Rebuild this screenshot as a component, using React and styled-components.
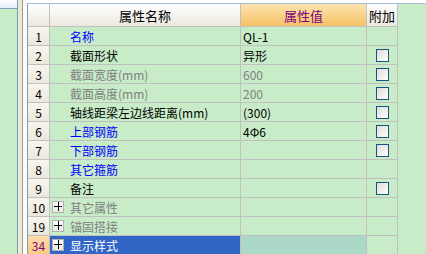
import styled, { createGlobalStyle, css } from "styled-components";

const GlobalStyle = createGlobalStyle`
  html, body {
    margin: 0;
    padding: 0;
    background: #c8ecc8;
  }
  body {
    font-family: "Noto Sans CJK SC", "Liberation Sans", sans-serif;
    font-size: 12px;
  }
`;

const tones = {
	black: "#000000",
	blue: "#0000ff",
	gray: "#808080",
	white: "#ffffff",
};

const Page = styled.div`
	display: flex;
	width: 426px;
	height: 254px;
	overflow: hidden;
`;

const SidePanel = styled.div`
	width: 17px;
	border-right: 1px solid #7f9db9;
	background: #c8ecc8;
	display: flex;
	flex-direction: column;
`;

const SideTab = styled.div`
	height: 8px;
	background: linear-gradient(#ffffff, #e4eef8);
	border-bottom: 1px solid #7f9db9;
`;

const Bevel = styled.div`
	width: 4px;
	background: #ece9d8;
	border-right: 1px solid #9a9a90;
`;

const Gutter = styled.div`
	width: 4px;
	background: #fbfbf8;
`;

const Panel = styled.div`
	flex: 1;
	display: flex;
	flex-direction: column;
	background: #ffffff;
	padding-top: 3px;
`;

const Grid = styled.div`
	flex: 1;
	display: grid;
	grid-template-columns: 22px 191px 126px 31px 1fr;
	grid-auto-rows: 19px;
	grid-template-rows: 23px;
	border-top: 1px solid #a7bfd8;
	border-left: 1px solid #7f9db9;
	background: #c8ecc8;
`;

const Cell = styled.div`
	box-sizing: border-box;
	border-right: 1px solid #c0c0c0;
	border-bottom: 1px solid #c0c0c0;
	display: flex;
	align-items: center;
	white-space: nowrap;
	overflow: hidden;
`;

const HeadCell = styled(Cell)`
	justify-content: center;
	font-size: 13px;
	color: #000;
	background: linear-gradient(#ffffff, #ebe8df);
	${(p) =>
		p.$accent &&
		css`
			color: #800080;
			background: linear-gradient(#fde3b0, #f5c264);
		`}
`;

const Filler = styled.div`
	background: #c8ecc8;
`;

const IndexCell = styled(Cell)`
	justify-content: center;
	background: linear-gradient(#f7f5ee, #ece8dc);
	color: #000;
	${(p) =>
		p.$selected &&
		css`
			background: linear-gradient(#fddcaa, #fbc980);
			color: #800080;
		`}
`;

const NameCell = styled(Cell)`
	padding-left: ${(p) => (p.$group ? "2px" : "20px")};
	gap: 6px;
	color: ${(p) => tones[p.$tone]};
	${(p) =>
		p.$selected &&
		css`
			background: #3165c6;
		`}
`;

const ValueCell = styled(Cell)`
	padding-left: 2px;
	color: ${(p) => tones[p.$tone]};
	${(p) =>
		p.$selected &&
		css`
			background: #acd8c8;
		`}
`;

const ExtraCell = styled(Cell)`
	justify-content: center;
`;

const Expander = styled.span`
	position: relative;
	width: 12px;
	height: 12px;
	box-sizing: border-box;
	border: 1px solid #b0b0b0;
	background: linear-gradient(#ffffff, #e8e8e4);
	flex: none;
	&::before,
	&::after {
		content: "";
		position: absolute;
		background: #000;
	}
	&::before {
		left: 1px;
		top: 4px;
		width: 8px;
		height: 1px;
	}
	&::after {
		left: 5px;
		top: 0px;
		width: 1px;
		height: 9px;
	}
`;

const CheckBox = styled.span`
	width: 13px;
	height: 13px;
	box-sizing: border-box;
	border: 1px solid #1c5180;
	background: linear-gradient(135deg, #dcdcd7, #ffffff);
`;

const rows = [
	{ n: 1, name: "名称", tone: "blue", value: "QL-1" },
	{ n: 2, name: "截面形状", tone: "black", value: "异形", check: true },
	{ n: 3, name: "截面宽度(mm)", tone: "gray", value: "600", valueTone: "gray", check: true },
	{ n: 4, name: "截面高度(mm)", tone: "gray", value: "200", valueTone: "gray", check: true },
	{ n: 5, name: "轴线距梁左边线距离(mm)", tone: "black", value: " (300)", check: true },
	{ n: 6, name: "上部钢筋", tone: "blue", value: "4Φ6", check: true },
	{ n: 7, name: "下部钢筋", tone: "blue", value: "", check: true },
	{ n: 8, name: "其它箍筋", tone: "blue", value: "" },
	{ n: 9, name: "备注", tone: "black", value: "", check: true },
	{ n: 10, name: "其它属性", tone: "gray", group: true },
	{ n: 19, name: "锚固搭接", tone: "gray", group: true },
	{ n: 34, name: "显示样式", tone: "white", group: true, selected: true },
];

const App = () => {
	return (
		<>
			<GlobalStyle />
			<Page>
				<SidePanel>
					<SideTab />
				</SidePanel>
				<Bevel />
				<Gutter />
				<Panel>
					<Grid>
						<HeadCell />
						<HeadCell>属性名称</HeadCell>
						<HeadCell $accent>属性值</HeadCell>
						<HeadCell>附加</HeadCell>
						<Filler />
						{rows.map((r) => [
							<IndexCell key={`i${r.n}`} $selected={r.selected}>
								{r.n}
							</IndexCell>,
							<NameCell key={`n${r.n}`} $tone={r.tone} $group={r.group} $selected={r.selected}>
								{r.group && <Expander />}
								{r.name}
							</NameCell>,
							<ValueCell key={`v${r.n}`} $tone={r.valueTone || "black"} $selected={r.selected}>
								{r.value}
							</ValueCell>,
							<ExtraCell key={`e${r.n}`}>{r.check && <CheckBox />}</ExtraCell>,
							<Filler key={`f${r.n}`} />,
						])}
					</Grid>
				</Panel>
			</Page>
		</>
	);
};

export default App;
